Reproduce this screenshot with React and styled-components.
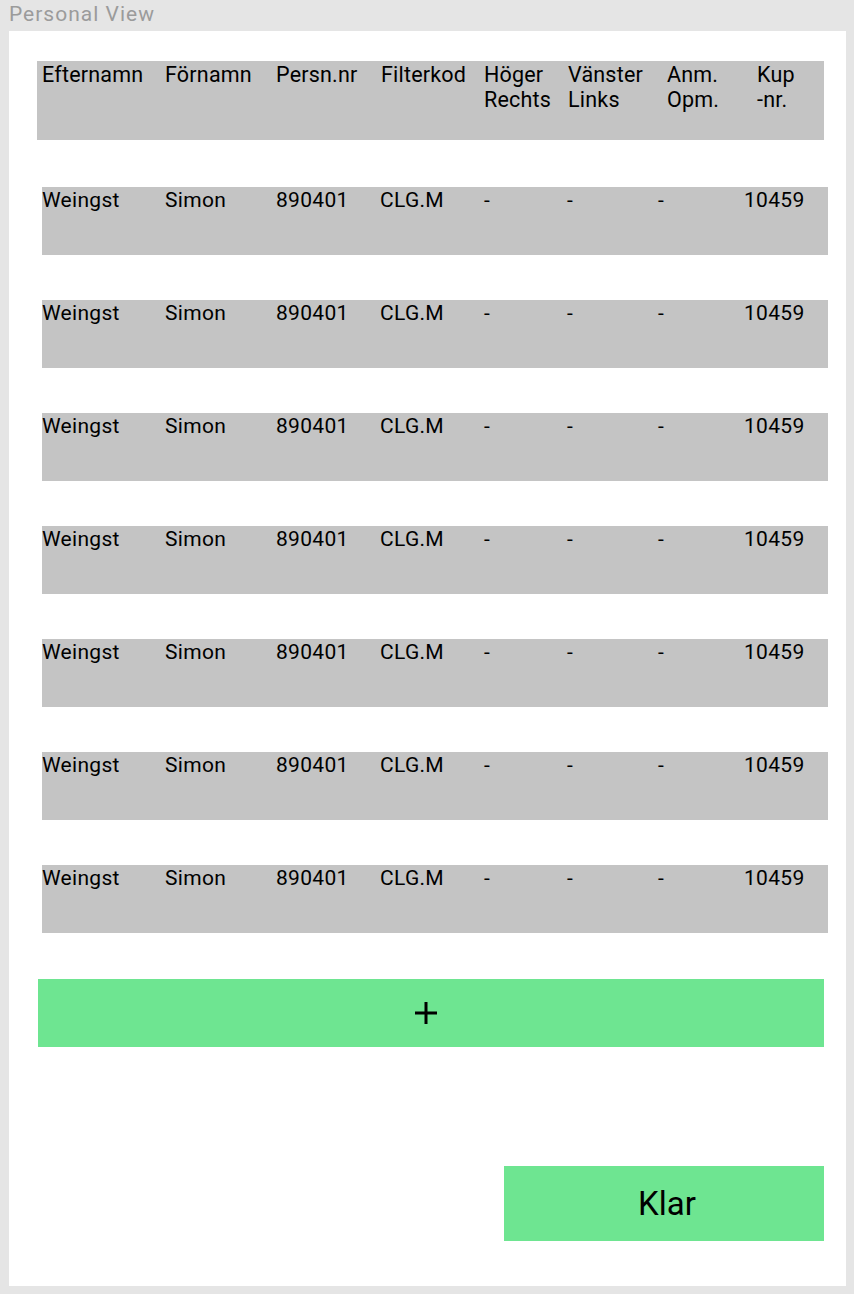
import React from 'react';
import styled, { createGlobalStyle } from 'styled-components';

const GlobalStyle = createGlobalStyle`
  html, body {
    margin: 0;
    padding: 0;
    background: #e5e5e5;
    font-family: Roboto, "Liberation Sans", Arial, sans-serif;
  }
`;

const headerCols = '123px 111px 105px 103px 84px 99px 90px 1fr';
const rowCols = '123px 111px 104px 104px 83px 91px 86px 1fr';

const columns = [
  ['Efternamn'],
  ['Förnamn'],
  ['Persn.nr'],
  ['Filterkod'],
  ['Höger', 'Rechts'],
  ['Vänster', 'Links'],
  ['Anm.', 'Opm.'],
  ['Kup', '-nr.'],
];

const rows = Array.from({ length: 7 }, () => [
  'Weingst',
  'Simon',
  '890401',
  'CLG.M',
  '-',
  '-',
  '-',
  '10459',
]);

export default function App() {
  return (
    <>
      <GlobalStyle />
      <Page>
        <Title>Personal View</Title>
        <Panel>
          <HeaderRow cols={headerCols}>
            {columns.map((lines, i) => (
              <Cell key={i}>
                {lines.map((l, j) => (
                  <div key={j}>{l}</div>
                ))}
              </Cell>
            ))}
          </HeaderRow>

          <Rows>
            {rows.map((row, i) => (
              <DataRow key={i} cols={rowCols}>
                {row.map((value, j) => (
                  <Cell key={j}>{value}</Cell>
                ))}
              </DataRow>
            ))}
          </Rows>

          <AddButton type="button" aria-label="Lägg till">
            <svg width="24" height="24" viewBox="0 0 24 24">
              <path d="M12 1v22M1 12h22" stroke="#000" strokeWidth="3" fill="none" />
            </svg>
          </AddButton>

          <Footer>
            <DoneButton type="button">Klar</DoneButton>
          </Footer>
        </Panel>
      </Page>
    </>
  );
}

const Page = styled.div`
  width: 854px;
  min-height: 1294px;
  display: flex;
  flex-direction: column;
`;

const Title = styled.div`
  height: 31px;
  padding-left: 9px;
  font-size: 21px;
  letter-spacing: 1px;
  line-height: 29px;
  color: #9b9b9b;
`;

const Panel = styled.div`
  margin: 0 8px 0 9px;
  height: 1255px;
  background: #ffffff;
  padding: 30px 0 0 28px;
  box-sizing: border-box;
  display: flex;
  flex-direction: column;
`;

const Grid = styled.div`
  display: grid;
  grid-template-columns: ${(p) => p.cols};
  background: #c4c4c4;
  color: #000;
  box-sizing: border-box;
`;

const HeaderRow = styled(Grid)`
  width: 787px;
  height: 79px;
  padding: 1px 0 0 5px;
  font-size: 21.5px;
  letter-spacing: 0.2px;
  line-height: 25px;
`;

const Rows = styled.div`
  display: flex;
  flex-direction: column;
  gap: 45px;
  margin: 47px 0 0 5px;
`;

const DataRow = styled(Grid)`
  width: 786px;
  height: 68px;
  padding-top: 1px;
  font-size: 21px;
  letter-spacing: 0.3px;
  line-height: 25px;
`;

const Cell = styled.div`
  white-space: nowrap;
`;

const GreenButton = styled.button`
  border: none;
  background: #6ee591;
  color: #000;
  font-family: inherit;
  padding: 0;
  cursor: pointer;
`;

const AddButton = styled(GreenButton)`
  width: 786px;
  height: 68px;
  margin: 46px 0 0 1px;
  display: flex;
  align-items: center;
  justify-content: center;
  padding-right: 10px;
`;

const Footer = styled.div`
  display: flex;
  justify-content: flex-end;
  width: 787px;
  margin-top: 119px;
`;

const DoneButton = styled(GreenButton)`
  width: 320px;
  height: 75px;
  padding-left: 6px;
  font-size: 33px;
`;
